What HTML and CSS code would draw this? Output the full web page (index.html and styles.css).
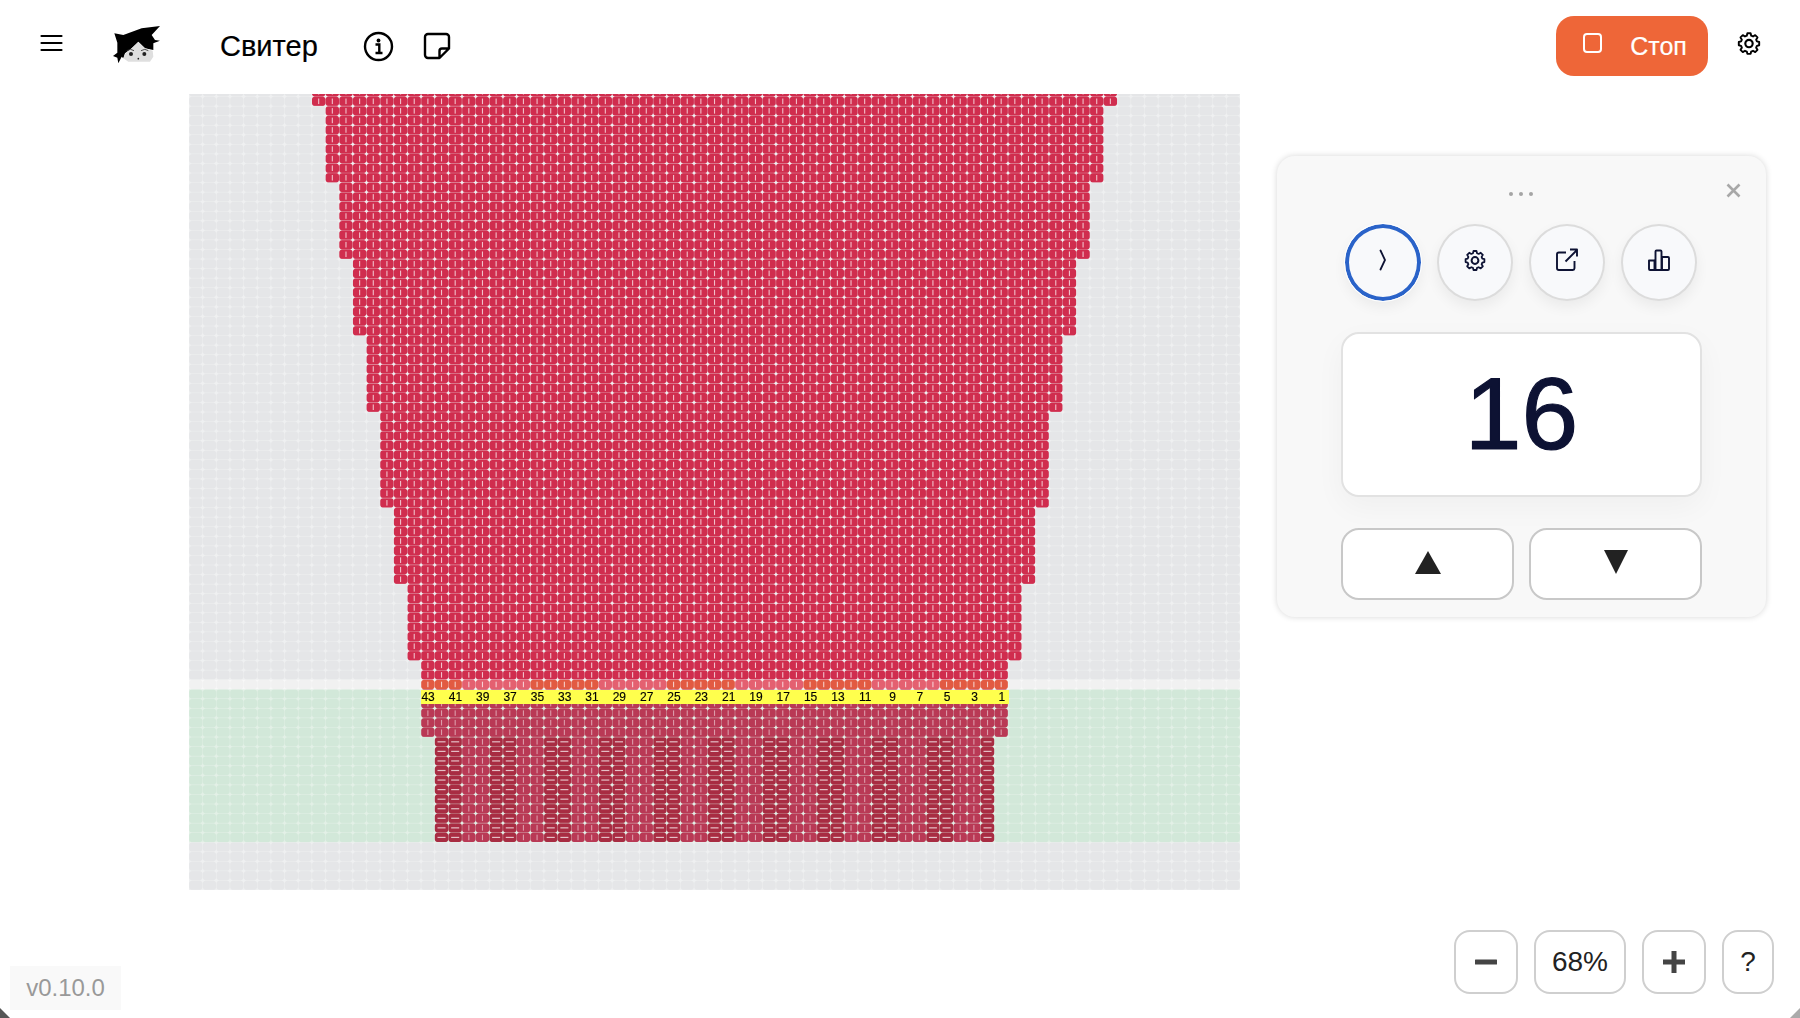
FILE: index.html
```html
<!DOCTYPE html>
<html lang="ru">
<head>
<meta charset="utf-8">
<title>Свитер</title>
<link rel="stylesheet" href="styles.css">
</head>
<body>
<header class="topbar">
  <div class="topbar-left">
    <button class="icon-btn menu" aria-label="Меню">
      <svg width="24" height="18" viewBox="0 0 24 18"><path d="M1.500 2h20M1.500 9h20M1.500 16h20" stroke="#000" stroke-width="2.200" stroke-linecap="round" fill="none"/></svg>
    </button>
    <svg class="logo" width="60" height="50" viewBox="0 0 180 150">
      <path d="M28 40l27 5 55-20 55-7-25 27 10 15 15 2-20 8v20l-25-5-20-20-20 20-20 15-5 15-5-5-10 20-3-17-13-5 13-10v-30z" fill="#000"/>
      <path d="M60 102l20-17 20-19 20 19 23 7 2 18-10 15H70l-15-10z" fill="#dfdfdf"/>
      <path d="M65 92q12-8 22 0M108 92q12-8 22 0" stroke="#333" stroke-width="2.500" fill="none"/>
      <circle cx="78" cy="102" r="6" fill="#222"/><circle cx="118" cy="102" r="6" fill="#222"/>
      <circle cx="100" cy="116" r="2.500" fill="#222"/>
    </svg>
    <h1 class="title">Свитер</h1>
    <button class="icon-btn info" aria-label="Инфо">
      <svg width="31" height="31" viewBox="0 0 31 31"><circle cx="15.500" cy="15.500" r="13.500" stroke="#000" stroke-width="2.400" fill="none"/><circle cx="15.500" cy="9.500" r="1.900" fill="#000"/><path d="M12.500 13.500h3.800v8M12.500 22h7" stroke="#000" stroke-width="2.400" fill="none"/></svg>
    </button>
    <button class="icon-btn note" aria-label="Заметка">
      <svg width="28" height="28" viewBox="0 0 28 28"><path d="M26 16.500V5a3 3 0 0 0-3-3H5a3 3 0 0 0-3 3v18a3 3 0 0 0 3 3h11.500zM26 16.500h-7a2.500 2.500 0 0 0-2.500 2.500v7" stroke="#000" stroke-width="2.400" stroke-linejoin="round" fill="none"/></svg>
    </button>
  </div>
  <div class="topbar-right">
    <button class="stop-btn">
      <span class="stop-square"></span>
      <span>Стоп</span>
    </button>
    <button class="icon-btn gear" aria-label="Настройки">
      <svg width="26" height="26" viewBox="0 0 24 24"><use href="#gear-shape"/></svg>
    </button>
  </div>
</header>

<main class="stage">
  <div class="chart">
    <canvas id="chart" width="2102" height="1592"></canvas>
    <div class="ruler" id="ruler"></div>
  </div>
</main>

<aside class="panel">
  <div class="panel-head">
    <span class="grip"><i></i><i></i><i></i></span>
    <svg class="close" width="15" height="15" viewBox="0 0 15 15"><path d="M1.500 1.500l12 12M13.500 1.500l-12 12" stroke="#a8a8a8" stroke-width="2.600" fill="none"/></svg>
  </div>
  <div class="round-row">
    <button class="round active" aria-label="Пуск"><svg width="10" height="22" viewBox="0 0 10 22"><path d="M2.500 1.500L7 11l-4.500 9.500" stroke="#0d1233" stroke-width="1.800" fill="none" stroke-linecap="round"/></svg></button>
    <button class="round" aria-label="Настройки"><svg width="24" height="24" viewBox="0 0 24 24" class="navy"><use href="#gear-shape"/></svg></button>
    <button class="round" aria-label="Открыть"><svg width="24" height="24" viewBox="0 0 24 24"><path d="M11 4.500H3.800A1.800 1.800 0 0 0 2 6.300v14a1.800 1.800 0 0 0 1.800 1.700h14a1.800 1.800 0 0 0 1.700-1.700V13M10.500 13.500L22 2M15 1.500h7v7" stroke="#0d1233" stroke-width="1.900" fill="none" stroke-linejoin="round"/></svg></button>
    <button class="round" aria-label="Статистика"><svg width="24" height="24" viewBox="0 0 24 24"><path d="M2 12.500h5.500V22H3a1 1 0 0 1-1-1zM8.500 3.500a1 1 0 0 1 1-1h4a1 1 0 0 1 1 1V22h-6zM15 9h6a1 1 0 0 1 1 1v11a1 1 0 0 1-1 1h-6z" stroke="#0d1233" stroke-width="1.900" fill="none" stroke-linejoin="round"/></svg></button>
  </div>
  <div class="counter">16</div>
  <div class="arrows">
    <button class="arrow"><svg width="26" height="24" viewBox="0 0 26 24"><path d="M13 1l13 23H0z" fill="#222"/></svg></button>
    <button class="arrow"><svg width="24" height="24" viewBox="0 0 24 24"><path d="M0 0h24L12 24z" fill="#222"/></svg></button>
  </div>
</aside>

<div class="zoom-bar">
  <button class="zoom-btn square" aria-label="Уменьшить"><svg width="22" height="6" viewBox="0 0 22 6"><rect width="22" height="5" y="0.500" rx="0.500" fill="#444"/></svg></button>
  <button class="zoom-btn value">68%</button>
  <button class="zoom-btn square" aria-label="Увеличить"><svg width="22" height="22" viewBox="0 0 22 22"><path d="M8.500 0h5v8.500H22v5h-8.500V22h-5v-8.500H0v-5h8.500z" fill="#444"/></svg></button>
  <button class="zoom-btn help">?</button>
</div>

<div class="version">v0.10.0</div>

<svg class="corner corner-l" width="10" height="10" viewBox="0 0 10 10"><path d="M0 0l10 10H0z" fill="#555"/></svg>
<svg class="corner corner-r" width="10" height="10" viewBox="0 0 10 10"><path d="M10 0v10H0z" fill="#aaa"/></svg>

<svg width="0" height="0" class="defs">
  <defs>
    <g id="gear-shape" fill="none" stroke="currentColor" stroke-width="2" stroke-linejoin="round">
      <path d="M10.300 2.300h3.400l.6 2.600 1.900.8 2.300-1.400 2.400 2.400-1.400 2.300.8 1.900 2.400.6v3.400l-2.400.6-.8 1.900 1.400 2.300-2.400 2.400-2.300-1.400-1.900.8-.6 2.400h-3.400l-.6-2.400-1.900-.8-2.300 1.400-2.400-2.400 1.400-2.300-.8-1.900-2.400-.6v-3.400l2.400-.6.8-1.900-1.400-2.300 2.400-2.400 2.300 1.400 1.900-.8z" transform="translate(12 12.500) scale(.88) translate(-12 -13.100)"/>
      <circle cx="12" cy="12.500" r="3.400"/>
    </g>
  </defs>
</svg>

<script src="chart.js"></script>
</body>
</html>
```

FILE: styles.css
```css
* { box-sizing: border-box; }
html, body { margin: 0; height: 100%; }
body {
  position: relative;
  height: 1018px;
  overflow: hidden;
  background: #fff;
  font-family: "Liberation Sans", Arial, sans-serif;
  color: #000;
}
button {
  font: inherit;
  color: inherit;
  background: none;
  border: 0;
  padding: 0;
  display: flex;
  align-items: center;
  justify-content: center;
}
.defs { position: absolute; }

.topbar {
  height: 94px;
  padding: 16px 25px 18px 40px;
  display: flex;
  justify-content: space-between;
  align-items: flex-start;
}
.topbar-left { display: flex; align-items: center; height: 60px; }
.topbar-right { display: flex; align-items: center; height: 60px; }
.icon-btn { flex: none; }
.menu { margin-top: -6px; }
.logo { margin-left: 41px; margin-top: -2px; flex: none; }
.title {
  margin: 0 0 0 55px;
  font-size: 29px;
  font-weight: 400;
  line-height: 1;
  -webkit-text-stroke: 0.2px #000;
}
.info { margin-left: 45px; }
.note { margin-left: 29px; }
.stop-btn {
  width: 152px;
  height: 60px;
  border-radius: 18px;
  background: #ee6638;
  color: #fff;
  font-size: 25px;
  gap: 28px;
  padding-left: 6px;
  -webkit-text-stroke: 0.2px #fff;
}
.stop-square {
  width: 19px;
  height: 20px;
  border: 2.200px solid #fff;
  border-radius: 4px;
  margin-top: -6px;
}
.gear { margin-left: 28px; margin-top: -6px; color: #000; margin-right: 13px; }

.stage { padding-left: 189px; }
.chart { position: relative; width: 1051px; height: 796px; }
#chart { display: block; width: 1051px; height: 796px; }
.ruler {
  position: absolute;
  left: 232.300px;
  top: 596px;
  width: 587.400px;
  height: 14px;
  background: #ffff4d;
  display: grid;
  grid-template-columns: repeat(43, 1fr);
  font-size: 12px;
  line-height: 14px;
  color: #000;
  -webkit-text-stroke: 0.15px #000;
  text-align: center;
}
.ruler span { white-space: nowrap; display: flex; justify-content: center; }

.panel {
  position: absolute;
  left: 1277px;
  top: 156px;
  width: 489px;
  height: 461px;
  background: #f8f8f8;
  border-radius: 18px;
  box-shadow: 0 0 6px rgba(0, 0, 0, .16);
  padding: 0 64px;
}
.panel-head { position: relative; height: 68px; }
.grip {
  position: absolute;
  left: 168px;
  top: 36px;
  display: flex;
  gap: 6px;
}
.grip i { width: 4px; height: 4px; border-radius: 50%; background: #a5a5a5; }
.close { position: absolute; top: 27px; left: 385px; }
.round-row { display: flex; gap: 16px; padding-left: 4px; }
.round {
  width: 76px;
  height: 77px;
  border-radius: 50%;
  border: 2px solid #dcdcdc;
  background: #f8f9fb;
  box-shadow: 0 6px 14px rgba(0, 0, 0, .06);
  padding-bottom: 6px;
}
.round.active { border: 4px solid #2a63c9; outline: 1px solid #fff; }
.round .navy { color: #0d1233; }
.counter {
  margin-top: 31px;
  height: 165px;
  border-radius: 18px;
  border: 2px solid #e2e2e2;
  background: #fff;
  box-shadow: 0 10px 30px rgba(0, 0, 0, .04);
  color: #0d1233;
  font-size: 102px;
  -webkit-text-stroke: 1.2px #0d1233;
  display: flex;
  align-items: center;
  justify-content: center;
}
.arrows { margin-top: 31px; display: flex; justify-content: space-between; }
.arrow {
  width: 173px;
  height: 72px;
  border-radius: 18px;
  border: 2px solid #c8c8c8;
  background: #fff;
  padding-bottom: 4px;
}

.zoom-bar {
  position: absolute;
  left: 1454px;
  top: 930px;
  display: flex;
  gap: 16px;
  height: 64px;
}
.zoom-btn {
  border: 2px solid #cfcfcf;
  border-radius: 16px;
  background: #fff;
  font-size: 28px;
  color: #222;
}
.zoom-btn.square { width: 64px; }
.zoom-btn.value { width: 92px; }
.zoom-btn.help { width: 52px; }

.version {
  position: absolute;
  left: 10px;
  top: 966px;
  width: 111px;
  height: 44px;
  background: #f9f9f9;
  color: #999;
  font-size: 24px;
  display: flex;
  align-items: center;
  justify-content: center;
}
.corner { position: absolute; bottom: 0; display: block; }
.corner-l { left: 0; }
.corner-r { right: 0; }
```

FILE: chart.js
```js
(function () {
  var CW = 13.65, RH = 9.56, COLS = 77, BOTTOM = 796;
  var canvas = document.getElementById('chart');
  var ctx = canvas.getContext('2d');
  ctx.scale(2, 2);

  // [first row from the bottom, row count, first column]
  var spans = [
    [5, 11, 18], [16, 8, 17], [24, 8, 16], [32, 8, 15], [40, 10, 14],
    [50, 8, 13], [58, 8, 12], [66, 8, 11], [74, 8, 10], [82, 3, 9]
  ];
  function firstCol(k) {
    for (var i = 0; i < spans.length; i++) {
      if (k >= spans[i][0] && k < spans[i][0] + spans[i][1]) return spans[i][2];
    }
    return -1;
  }
  function roundRect(x, y, w, h, r) {
    ctx.beginPath();
    ctx.moveTo(x + r, y);
    ctx.arcTo(x + w, y, x + w, y + h, r);
    ctx.arcTo(x + w, y + h, x, y + h, r);
    ctx.arcTo(x, y + h, x, y, r);
    ctx.arcTo(x, y, x + w, y, r);
    ctx.closePath();
    ctx.fill();
  }
  function zone(k) {
    if (k === 21) return 'active';
    if (k >= 5 && k <= 20) return 'green';
    return 'plain';
  }
  var bg = { plain: '#eff0f1', green: '#e2f0e6', active: '#f8f8f8' };
  var empty = { plain: '#e5e6e8', green: '#d2e8d9', active: '#f1f1f1' };
  var knit = { plain: '#d02d4e', green: '#b93955', active: '#e46070' };

  ctx.fillStyle = bg.plain;
  ctx.fillRect(0, 0, 1051, 796);

  for (var k = 0; k < 84; k++) {
    var y = BOTTOM - (k + 1) * RH;
    var z = zone(k);
    ctx.fillStyle = bg[z];
    ctx.fillRect(0, y, COLS * CW, RH);
    var start = firstCol(k);
    var end = start < 0 ? -1 : COLS - start;
    for (var c = 0; c < COLS; c++) {
      var x = c * CW;
      var stitch = start >= 0 && c >= start && c < end;
      var rib = k >= 5 && k <= 15;
      var purl = stitch && rib && ((c - start) % 4 === 0 || (c - start) % 4 === 1);
      var color = empty[z];
      if (stitch) {
        color = knit[z];
        if (purl) color = '#a82c42';
        if (z === 'active' && (end - 1 - c) % 10 < 5) color = '#e25a42';
      }
      ctx.fillStyle = color;
      var inset = stitch ? 0.15 : 0.25;
      roundRect(x + inset, y + inset, CW - 2 * inset, RH - 2 * inset, 2.6);
      if (stitch) {
        ctx.fillStyle = z === 'green' && !purl ? 'rgba(255,255,255,.5)' : 'rgba(255,255,255,.7)';
        if (purl) ctx.fillRect(x + 2.8, y + RH / 2 - 0.6, CW - 5.6, 1.2);
        else ctx.fillRect(x + CW / 2 - 0.55, y + 2, 1.1, RH - 4);
      }
    }
  }

  var ruler = document.getElementById('ruler');
  for (var n = 43; n >= 1; n--) {
    var cell = document.createElement('span');
    if (n % 2 === 1) cell.textContent = String(n);
    ruler.appendChild(cell);
  }
})();
```
